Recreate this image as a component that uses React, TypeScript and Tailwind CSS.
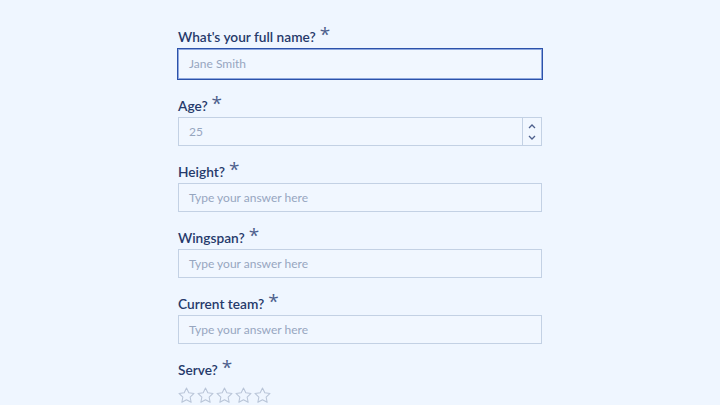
import React from "react";

const Star = () => (
  <svg width="19" height="19" viewBox="0 0 24 24" fill="none" stroke="#b9c5d8" strokeWidth="1.3" strokeLinejoin="round">
    <path d="M12 2.5l2.9 6.1 6.6.8-4.9 4.6 1.3 6.6L12 17.3l-5.9 3.3 1.3-6.6-4.9-4.6 6.6-.8z" />
  </svg>
);

const Label = ({ text }: { text: string }) => (
  <div className="h-[18px] mb-[4px] flex items-center text-[13.7px] font-semibold text-[#263a6b] leading-[18px] pt-[3px]">
    <span>{text}</span>
    <span className="ml-[4px] text-[19px] font-normal text-[#4d5f8c] relative top-[-3px]" style={{ fontFamily: '"Open Sans", sans-serif' }}>*</span>
  </div>
);

const TextField = ({ label, placeholder }: { label: string; placeholder: string }) => (
  <div className="mb-[15px]">
    <Label text={label} />
    <div className="h-[29px] border border-[#c3d1e4] bg-[#f1f7ff] flex items-center px-[10px] text-[12px] text-[#97a6bf]">
      {placeholder}
    </div>
  </div>
);

export default function App() {
  return (
    <div className="w-[720px] h-[405px] bg-[#eff6ff] overflow-hidden" style={{ fontFamily: 'Lato, "Open Sans", sans-serif' }}>
      <div className="w-[364px] ml-[178px] pt-[26px]">
        <div className="mb-[15px]">
          <Label text="What's your full name?" />
          <div className="h-[32px] -mx-[1px] border border-[#2c52aa] shadow-[inset_0_0_0_1px_#8fa8de] bg-[#f1f7ff] flex items-center px-[11px] text-[12px] text-[#97a6bf]">
            Jane Smith
          </div>
        </div>
        <div className="mb-[15px]">
          <Label text="Age?" />
          <div className="h-[29px] border border-[#c3d1e4] bg-[#f1f7ff] flex items-center text-[12px] text-[#97a6bf]">
            <div className="flex-1 px-[10px]">25</div>
            <div className="w-[19px] h-full border-l border-[#c3d1e4] flex flex-col items-center justify-center gap-[6px]">
              <svg width="8" height="5" viewBox="0 0 8 5" fill="none" stroke="#4d5f8c" strokeWidth="1.3"><path d="M1 4l3-3 3 3" /></svg>
              <svg width="8" height="5" viewBox="0 0 8 5" fill="none" stroke="#4d5f8c" strokeWidth="1.3"><path d="M1 1l3 3 3-3" /></svg>
            </div>
          </div>
        </div>
        <TextField label="Height?" placeholder="Type your answer here" />
        <TextField label="Wingspan?" placeholder="Type your answer here" />
        <TextField label="Current team?" placeholder="Type your answer here" />
        <div>
          <Label text="Serve?" />
          <div className="flex mt-[9px] -ml-[1px]">
            <Star /><Star /><Star /><Star /><Star />
          </div>
        </div>
      </div>
    </div>
  );
}
